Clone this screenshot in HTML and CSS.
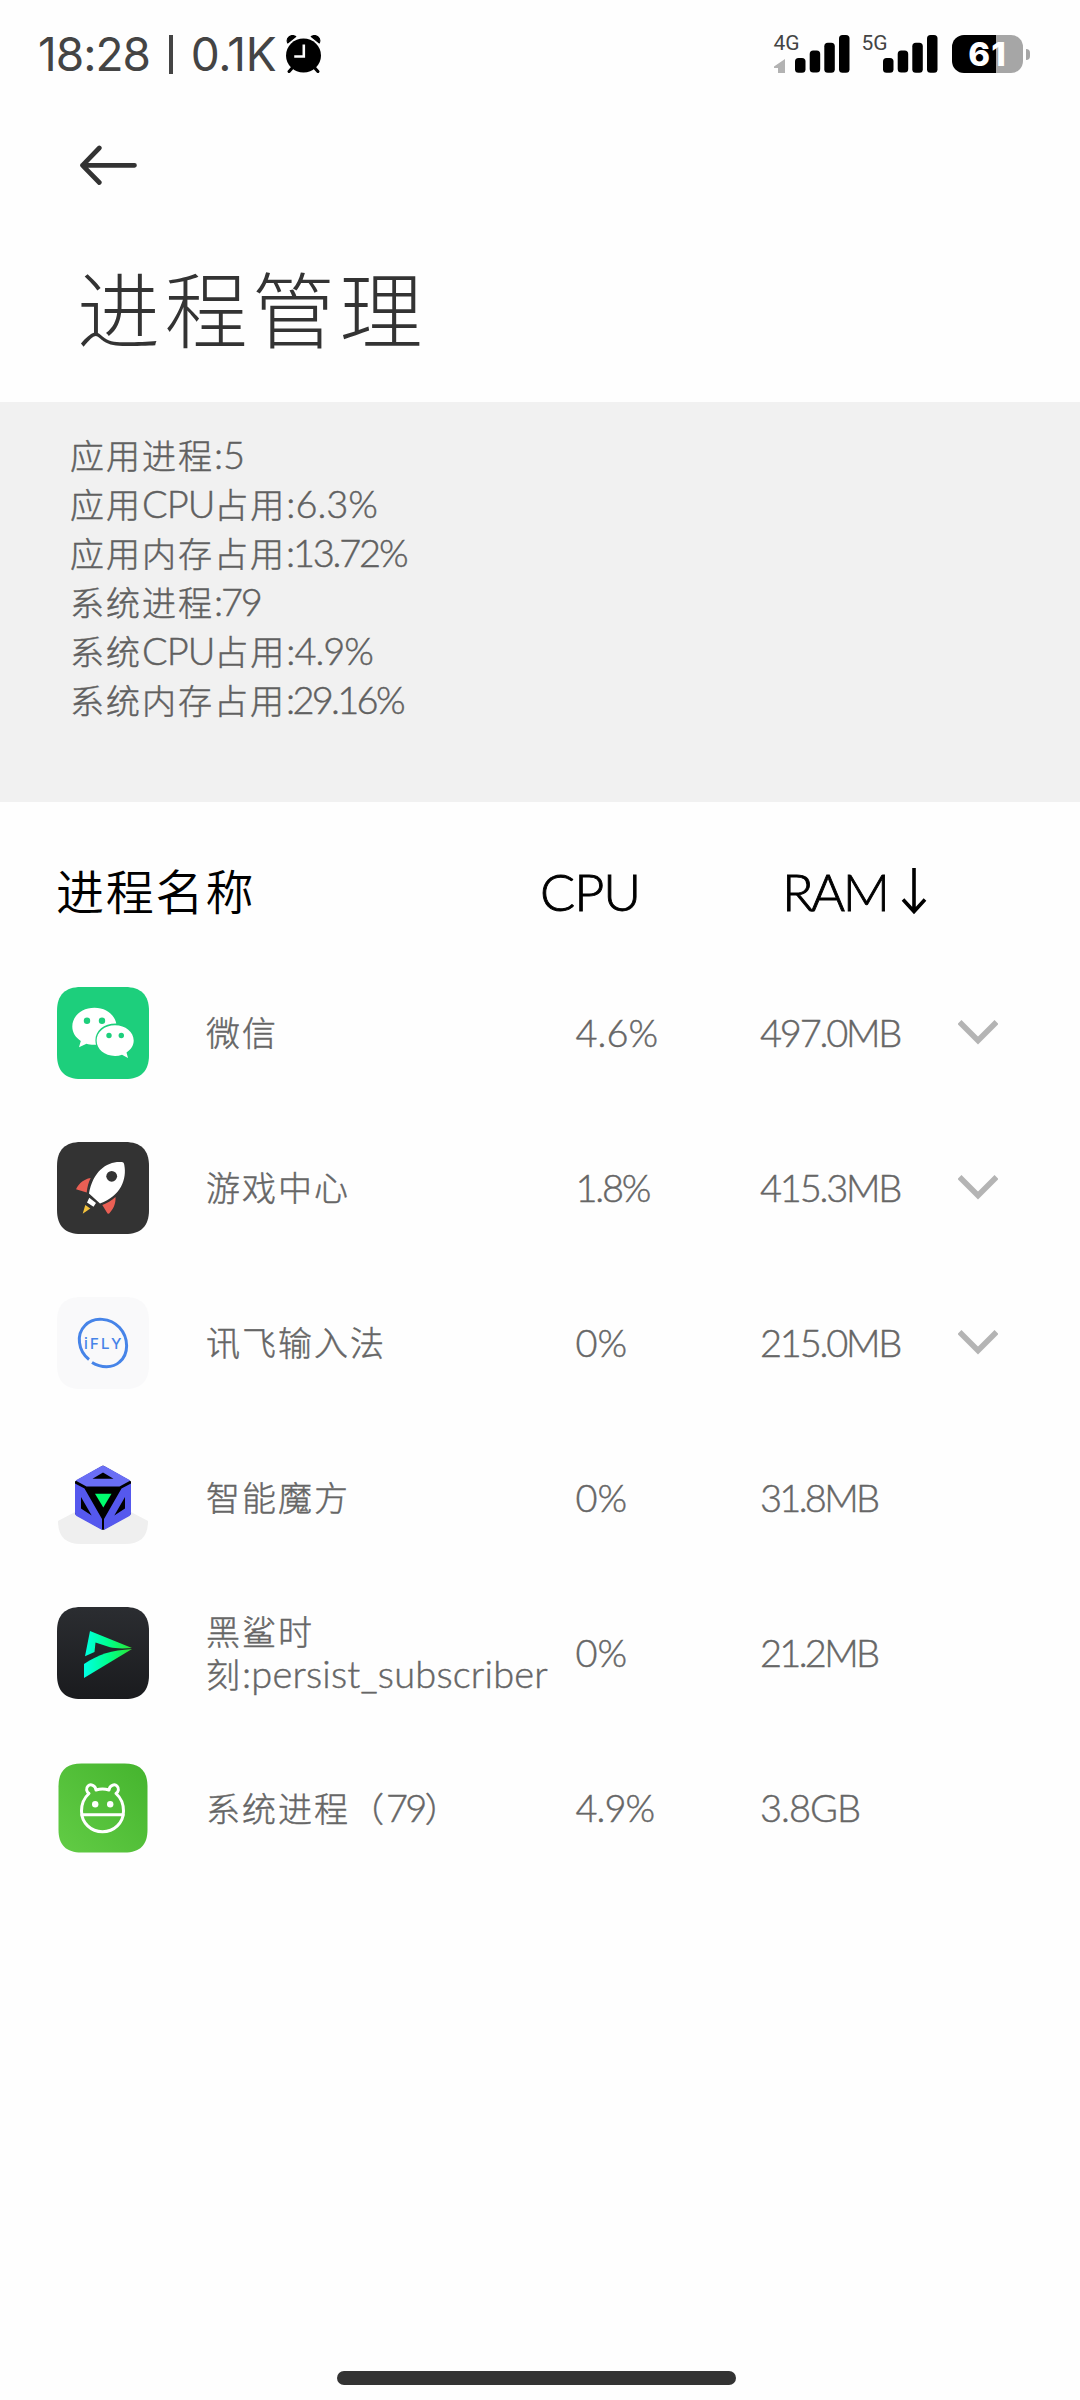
FILE: index.html
```html
<!DOCTYPE html>
<html lang="zh-CN">
<head>
<meta charset="utf-8">
<title>进程管理</title>
<link rel="stylesheet" href="styles.css">
</head>
<body>
<header class="status">
  <span class="clock">18:28</span>
  <span class="divider"></span>
  <span class="speed">0.1K</span>
  <svg class="alarm" viewBox="0 0 34 38" width="35" height="38" preserveAspectRatio="none">
    <path d="M1.600 8C-.5 3 5 -1.500 9.500 1.500ZM32.400 8C34.500 3 29 -1.500 24.500 1.500Z" fill="#000" stroke="#000" stroke-linejoin="round"/>
    <path d="M6 33L3 36.500M28 33l3 3.500" stroke="#000" stroke-width="3" stroke-linecap="round"/>
    <circle cx="17" cy="20.500" r="17" fill="#000"/>
    <path d="M17.300 9.500v12H8" fill="none" stroke="#fefefe" stroke-width="2.500"/>
  </svg>
  <div class="signals">
    <div class="sim">
      <span class="net">4G</span>
      <svg class="data" viewBox="0 0 11 14" width="11" height="14"><path d="M11 0v14H4V9H0V7.500Z" fill="#b2b2b2"/></svg>
      <svg class="bars" viewBox="0 0 55 38" width="55" height="38"><rect y="23" width="10.500" height="14.700" rx="3.500"/><rect x="14.700" y="15.600" width="10.500" height="22" rx="3.500"/><rect x="29.300" y="7.700" width="10.500" height="30" rx="3.500"/><rect x="44" y="0" width="10.500" height="37.700" rx="3.500"/></svg>
    </div>
    <div class="sim">
      <span class="net">5G</span>
      <svg class="bars" viewBox="0 0 55 38" width="55" height="38"><rect y="23" width="10.500" height="14.700" rx="3.500"/><rect x="14.700" y="15.600" width="10.500" height="22" rx="3.500"/><rect x="29.300" y="7.700" width="10.500" height="30" rx="3.500"/><rect x="44" y="0" width="10.500" height="37.700" rx="3.500"/></svg>
    </div>
    <div class="battery"><span class="level">61</span></div>
    <span class="nub"></span>
  </div>
</header>

<nav class="toolbar">
  <svg class="back" viewBox="0 0 62 40" width="62" height="40"><path d="M6.500 20.300H58.500M23.300 3L6.500 20.300L23.300 37.500" fill="none" stroke="#333" stroke-width="4.700" stroke-linecap="round" stroke-linejoin="round"/></svg>
</nav>
<h1 class="title">进程管理</h1>

<section class="summary">
  <p>应用进程<span class="num">:5</span></p>
  <p>应用<span class="num k1">CPU</span>占用<span class="num">:6.3%</span></p>
  <p>应用内存占用<span class="num k2">:13.72%</span></p>
  <p>系统进程<span class="num k2">:79</span></p>
  <p>系统<span class="num k1">CPU</span>占用<span class="num k1">:4.9%</span></p>
  <p>系统内存占用<span class="num k3">:29.16%</span></p>
</section>

<div class="columns">
  <span class="col-name">进程名称</span>
  <span class="col-cpu">CPU</span>
  <span class="col-ram">RAM<svg class="sort" viewBox="0 0 26 48" width="26" height="48"><path d="M13 1v43M2 32.500L13 44.500L24 32.500" fill="none" stroke="#000" stroke-width="3.600"/></svg></span>
</div>

<main class="list">
  <div class="row">
    <svg class="icon" viewBox="0 0 92 92" width="92" height="92">
      <path d="M24 0H68C84 0 92 8 92 24V68C92 84 84 92 68 92H24C8 92 0 84 0 68V24C0 8 8 0 24 0Z" fill="#1dcf7c"/>
      <path d="M37.500 20.800C25 20.800 15.300 29 15.300 39.500C15.300 45.500 18.500 50.500 23.800 54L22 60.200L29.500 56.800C32 57.600 35 58 39 57.800C36 46 45 36.300 59.300 36.500C57.500 27.500 48.500 20.800 37.500 20.800Z" fill="#fff"/>
      <path d="M58 38.200C47.500 38.200 39.600 45 39.600 53.600C39.600 62.200 47.500 69 58 69C60.500 69 62.800 68.600 65 67.800L71 71L69.500 65.600C74 62.700 76.700 58.500 76.700 53.600C76.700 45 68.500 38.200 58 38.200Z" fill="#fff"/>
      <g fill="#1dcf7c"><circle cx="30" cy="33.700" r="3.200"/><circle cx="45" cy="33.700" r="3.200"/><circle cx="52" cy="48.500" r="2.700"/><circle cx="64.300" cy="48.500" r="2.700"/></g>
    </svg>
    <span class="name">微信</span><span class="cpu">4.6%</span><span class="ram k2">497.0MB</span>
    <svg class="chev" viewBox="0 0 40 28" width="40" height="28"><path d="M1.500 4L20 22.500L38.500 4" fill="none" stroke="#b4b4b4" stroke-width="5.600"/></svg>
  </div>
  <div class="row">
    <svg class="icon" viewBox="0 0 92 92" width="92" height="92">
      <path d="M24 0H68C84 0 92 8 92 24V68C92 84 84 92 68 92H24C8 92 0 84 0 68V24C0 8 8 0 24 0Z" fill="#333"/>
      <path d="M64.500 20C66.500 20 67 21 67.300 23C70 37 64 54 43 61.500L32 51.500C36 29 50 19 64.500 20Z" fill="#fff"/>
      <circle cx="54.700" cy="34.300" r="5.400" fill="#333"/>
      <path d="M33.700 36L31 36.500C25 39 21.500 42 19 47.300L29.700 50.500C30.300 45 31.500 40 33.700 36ZM58.500 55C59 62 56 67.500 52 71.700L50.500 71.500L45.300 63C50 61.500 54.500 58.500 58.500 55Z" fill="#ea5f54"/>
      <path d="M32.300 55.700L39 61L36.500 64.700L30 60.500Z" fill="#fff"/>
      <path d="M28.300 63L33.300 66.600L25.700 71.700Z" fill="#f5c33c"/>
    </svg>
    <span class="name">游戏中心</span><span class="cpu k2">1.8%</span><span class="ram k2">415.3MB</span>
    <svg class="chev" viewBox="0 0 40 28" width="40" height="28"><path d="M1.500 4L20 22.500L38.500 4" fill="none" stroke="#b4b4b4" stroke-width="5.600"/></svg>
  </div>
  <div class="row">
    <svg class="icon" viewBox="0 0 92 92" width="92" height="92">
      <path d="M24 0H68C84 0 92 8 92 24V68C92 84 84 92 68 92H24C8 92 0 84 0 68V24C0 8 8 0 24 0Z" fill="#f9f9fa"/>
      <path d="M32 62.500C21 54 19 37.500 28 28.500C37 19 53.500 21 62.500 30.500C72 41 72 57 62.500 65C55.500 71.500 44 71 35 65.500" fill="none" stroke="#4684e8" stroke-width="3"/>
      <text class="fly" x="27" y="51.500" textLength="37.500" lengthAdjust="spacing">iFLY</text>
    </svg>
    <span class="name">讯飞输入法</span><span class="cpu">0%</span><span class="ram k2">215.0MB</span>
    <svg class="chev" viewBox="0 0 40 28" width="40" height="28"><path d="M1.500 4L20 22.500L38.500 4" fill="none" stroke="#b4b4b4" stroke-width="5.600"/></svg>
  </div>
  <div class="row">
    <svg class="icon" viewBox="0 0 92 92" width="92" height="92">
      <path d="M1 69L18 60H74L91 69C91 84 84 92 68 92H24C8 92 1 84 1 69Z" fill="#efefef"/>
      <path d="M46 14L73.500 29.500V62L46 77.500L18.500 62V29.500Z" fill="#000" stroke="#000" stroke-linejoin="round"/>
      <path d="M43.500 14.500Q46 13 48.500 14.500L73.500 28.500L62.500 34.500H29.500L18.500 28.500ZM46 20.500L35.500 26.800H56.500Z" fill="#6a6ef5" fill-rule="evenodd"/>
      <path d="M18 31.500L27.500 36.500L45 67V78L19.500 64Q18 63 18 61ZM24 45V56.500L34.700 63.500ZM74 31.500L64.500 36.500L47 67V78L72.500 64Q74 63 74 61ZM68 45V56.500L57.300 63.500Z" fill="#5558ee" fill-rule="evenodd"/>
      <path d="M38 41.700H54.500L46.300 55.500Z" fill="#00ff6e"/>
    </svg>
    <span class="name">智能魔方</span><span class="cpu">0%</span><span class="ram k3">31.8MB</span>
  </div>
  <div class="row">
    <svg class="icon" viewBox="0 0 92 92" width="92" height="92">
      <defs>
        <linearGradient id="dark" x2="0" y2="1"><stop stop-color="#2b2d31"/><stop offset="1" stop-color="#1a1b1e"/></linearGradient>
        <linearGradient id="fin" gradientUnits="userSpaceOnUse" x1="27" y1="0" x2="75" y2="0"><stop stop-color="#00ffe5"/><stop offset=".55" stop-color="#00ff85"/><stop offset="1" stop-color="#2fe02f"/></linearGradient>
      </defs>
      <path d="M24 0H68C84 0 92 8 92 24V68C92 84 84 92 68 92H24C8 92 0 84 0 68V24C0 8 8 0 24 0Z" fill="url(#dark)"/>
      <path d="M33 24L75 41C66 41.800 58 41.500 53 40.300L38.500 35.500L37.500 45L28 49.300Z" fill="url(#fin)"/>
      <path d="M75 42L27 71V57C42 47 54 43.500 75 42Z" fill="url(#fin)"/>
    </svg>
    <span class="name">黑鲨时<br>刻<span class="num proc">:persist_subscriber</span></span><span class="cpu">0%</span><span class="ram k3">21.2MB</span>
  </div>
  <div class="row">
    <svg class="icon" viewBox="0 0 92 92" width="92" height="92">
      <defs><linearGradient id="leaf" x1="0" y1="1" x2="1" y2="0"><stop stop-color="#62cc45"/><stop offset="1" stop-color="#45b42e"/></linearGradient></defs>
      <path d="M24.500 1.500H67.500C83 1.500 90.500 9 90.500 24.500V67.500C90.500 83 83 90.500 67.500 90.500H24.500C9 90.500 1.500 83 1.500 67.500V24.500C1.500 9 9 1.500 24.500 1.500Z" fill="url(#leaf)"/>
      <g fill="none" stroke="#fff" stroke-width="3" stroke-linecap="round" stroke-linejoin="round">
        <path d="M39 28C43 26.700 48 26.700 52 28C52.500 23.500 57.500 21.500 60 24C62.500 26.500 61.500 29.500 59 31.500C63.500 35.500 66.500 42 66.500 49C66.500 61 57 69.700 45.500 69.700S24.500 61 24.500 49C24.500 42 27.500 35.500 32 31.500C29.500 29.500 28.500 26.500 31 24C33.500 21.500 38.500 23.500 39 28Z"/>
        <path d="M25 52.700H66"/>
      </g>
      <g fill="#fff"><circle cx="38.200" cy="42.300" r="3.200"/><circle cx="53.200" cy="42.300" r="3.200"/></g>
    </svg>
    <span class="name">系统进程（<span class="num k3">79</span>）</span><span class="cpu k1">4.9%</span><span class="ram k1">3.8GB</span>
  </div>
</main>
<div class="home"></div>
</body>
</html>
```
FILE: styles.css
```css
* { box-sizing: border-box; margin: 0; padding: 0; }
body {
  display: flex;
  flex-direction: column;
  width: 1080px;
  height: 2400px;
  overflow: hidden;
  background: #fefefe;
  color: #666;
  font: 300 38px Lato, "Noto Sans CJK SC", sans-serif;
}
svg { display: block; flex: none; }

/* status bar */
.status {
  display: flex;
  align-items: center;
  height: 108px;
  padding: 0 50px 0 38px;
  color: #444;
  font: 400 46px Inter, sans-serif;
}
.clock { width: 130.500px; letter-spacing: -1px; }
.divider { width: 4.700px; height: 39px; background: #444; }
.speed { width: 94px; margin-left: 17.500px; letter-spacing: -.3px; }
.alarm { margin-left: 1.300px; }
.signals { display: flex; align-items: center; margin-left: auto; }
.sim { position: relative; display: flex; align-items: center; padding-left: 21px; margin-right: 12px; }
.sim + .sim { padding-left: 21px; margin-right: 14.500px; }
.net { position: absolute; left: 0; top: 0; font: 400 21px/17px Roboto, sans-serif; }
.data { position: absolute; left: 0; bottom: 0; }
.battery {
  width: 71px;
  height: 38px;
  border-radius: 12px;
  background: linear-gradient(90deg, #000 61.500%, #a6a6a6 61.500%);
  color: #fff;
  font: 800 33px/38px Inter, sans-serif;
  letter-spacing: 1px;
  text-align: center;
}
.level { display: block; }
.nub { width: 4px; height: 11px; margin-left: 3px; border-radius: 0 5px 5px 0; background: #a6a6a6; }

/* page heading */
.toolbar { height: 115px; padding: 37px 76px 0; }
.title {
  height: 179px;
  padding-left: 77px;
  color: #333;
  font: 300 83px/167px "Noto Sans CJK SC", sans-serif;
  letter-spacing: 4.500px;
}

/* totals */
.summary {
  height: 400px;
  padding: 28px 70px 0;
  background: #f1f1f1;
  color: #606060;
  font-size: 34px;
  line-height: 49px;
  font-family: "Noto Sans CJK SC", sans-serif;
  letter-spacing: 2px;
}
.summary, .list { -webkit-text-stroke: .45px currentColor; }
.num { font-family: Lato, sans-serif; font-size: 38px; letter-spacing: 0; }
.proc { letter-spacing: .2px; }
.k1 { letter-spacing: -1px; }
.k2 { letter-spacing: -2.200px; }
.k3 { letter-spacing: -2.700px; }

/* table */
.columns, .row {
  display: grid;
  align-items: center;
  grid-template-columns: 149px 369.500px 184.500px 198px auto;
  padding-left: 57px;
}
.columns {
  grid-template-columns: 484px 242px auto;
  height: 153.500px;
  padding: 20px 0 0 56px;
  color: #000;
  font-size: 52px;
  -webkit-text-stroke: .9px #000;
}
.col-name { font: 350 48px "Noto Sans CJK SC", sans-serif; letter-spacing: 1.800px; -webkit-text-stroke: 0; }
.col-cpu, .col-ram { padding-top: 5px; letter-spacing: -1px; }
.col-ram { display: flex; align-items: center; letter-spacing: -2.500px; }
.sort { margin-left: 14px; }
.row { height: 155px; }
.cpu, .ram, .chev { margin-bottom: 3px; }
.name {
  font: 300 34px/42.500px "Noto Sans CJK SC", sans-serif;
  margin-bottom: 1px;
  letter-spacing: 2px;
  white-space: nowrap;
}
.fly { fill: #4684e8; font: 500 15px Inter, sans-serif; -webkit-text-stroke: 0; }

.home { width: 399px; height: 14px; margin: auto 0 15px 337px; border-radius: 7px; background: #333; }
```
